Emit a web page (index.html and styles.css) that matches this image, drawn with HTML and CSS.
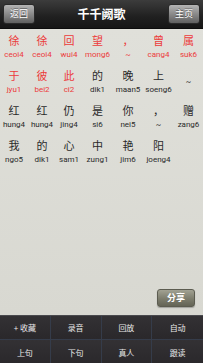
FILE: index.html
```html
<!DOCTYPE html>
<html lang="zh">
<head>
<meta charset="utf-8">
<title>千千阙歌</title>
<link rel="stylesheet" href="styles.css">
</head>
<body>
<div class="app">
  <header class="topbar">
    <button class="hbtn">返回</button>
    <div class="title">千千阙歌</div>
    <button class="hbtn">主页</button>
  </header>
  <main class="content">
    <div class="lyric-row">
      <div class="cell red"><span class="ch">徐</span><span class="py">ceoi4</span></div>
      <div class="cell red"><span class="ch">徐</span><span class="py">ceoi4</span></div>
      <div class="cell red"><span class="ch">回</span><span class="py">wui4</span></div>
      <div class="cell red"><span class="ch">望</span><span class="py">mong6</span></div>
      <div class="cell red"><span class="ch">，</span><span class="py">~</span></div>
      <div class="cell red"><span class="ch">曾</span><span class="py">cang4</span></div>
      <div class="cell red"><span class="ch">属</span><span class="py">suk6</span></div>
    </div>
    <div class="lyric-row">
      <div class="cell red"><span class="ch">于</span><span class="py">jyu1</span></div>
      <div class="cell red"><span class="ch">彼</span><span class="py">bei2</span></div>
      <div class="cell red"><span class="ch">此</span><span class="py">ci2</span></div>
      <div class="cell"><span class="ch">的</span><span class="py">dik1</span></div>
      <div class="cell"><span class="ch">晚</span><span class="py">maan5</span></div>
      <div class="cell"><span class="ch">上</span><span class="py">soeng6</span></div>
      <div class="cell lone"><span class="py">~</span></div>
    </div>
    <div class="lyric-row">
      <div class="cell"><span class="ch">红</span><span class="py">hung4</span></div>
      <div class="cell"><span class="ch">红</span><span class="py">hung4</span></div>
      <div class="cell"><span class="ch">仍</span><span class="py">jing4</span></div>
      <div class="cell"><span class="ch">是</span><span class="py">si6</span></div>
      <div class="cell"><span class="ch">你</span><span class="py">nei5</span></div>
      <div class="cell"><span class="ch">，</span><span class="py">~</span></div>
      <div class="cell"><span class="ch">赠</span><span class="py">zang6</span></div>
    </div>
    <div class="lyric-row">
      <div class="cell"><span class="ch">我</span><span class="py">ngo5</span></div>
      <div class="cell"><span class="ch">的</span><span class="py">dik1</span></div>
      <div class="cell"><span class="ch">心</span><span class="py">sam1</span></div>
      <div class="cell"><span class="ch">中</span><span class="py">zung1</span></div>
      <div class="cell"><span class="ch">艳</span><span class="py">jim6</span></div>
      <div class="cell"><span class="ch">阳</span><span class="py">joeng4</span></div>
    </div>
    <div class="spacer"></div>
    <div class="share-wrap">
      <button class="share">分享</button>
    </div>
  </main>
  <nav class="toolbar">
    <div class="tb">+ 收藏</div>
    <div class="tb">录音</div>
    <div class="tb">回放</div>
    <div class="tb">自动</div>
    <div class="tb">上句</div>
    <div class="tb">下句</div>
    <div class="tb">真人</div>
    <div class="tb">跟读</div>
  </nav>
</div>
</body>
</html>
```

FILE: styles.css
```css
* { box-sizing: border-box; }
html, body {
  margin: 0;
  padding: 0;
  width: 203px;
  height: 363px;
  overflow: hidden;
}
body {
  font-family: "Noto Sans CJK SC", "Noto Sans", sans-serif;
}
.app {
  width: 203px;
  height: 363px;
  display: flex;
  flex-direction: column;
  background: #dcdcd5;
}
.topbar {
  height: 29px;
  flex: none;
  display: flex;
  align-items: center;
  justify-content: space-between;
  padding: 0 3px;
  background: linear-gradient(#3c3c3c, #202020 60%, #161616);
  border-bottom: 1px solid #0c0c0c;
}
.hbtn {
  width: 32px;
  height: 20px;
  padding: 0;
  border: 1px solid #2a2a2a;
  border-radius: 3px;
  background: linear-gradient(#b4b4b4, #8a8a8a 50%, #606060);
  color: #fff;
  font-family: "Noto Sans CJK SC", sans-serif;
  font-size: 9px;
  line-height: 18px;
  text-shadow: 0 -1px 0 rgba(0,0,0,0.4);
}
.title {
  color: #fff;
  font-size: 12px;
  font-weight: bold;
  line-height: 16px;
}
.content {
  flex: 1;
  display: flex;
  flex-direction: column;
  padding-top: 3px;
  background: linear-gradient(#e0e0da, #d8d8d1);
}
.lyric-row {
  display: grid;
  grid-template-columns: 28px 28px 26px 31px 30px 31px 29px;
  height: 30px;
  margin-bottom: 5px;
}
.cell {
  display: flex;
  flex-direction: column;
  align-items: center;
  color: #2a2a2a;
}
.cell.red { color: #ec3b3b; }
.ch {
  font-size: 11px;
  line-height: 16px;
  height: 16px;
}
.py {
  font-family: Roboto, "Liberation Sans", sans-serif;
  font-size: 8px;
  line-height: 14px;
  height: 14px;
  white-space: nowrap;
}
.cell.lone {
  justify-content: center;
}
.spacer { flex: 1; }
.share-wrap {
  display: flex;
  justify-content: flex-end;
  padding: 0 8px 8px 0;
}
.share {
  width: 38px;
  height: 18px;
  padding: 0;
  border: 1px solid #5c5c50;
  border-radius: 3px;
  background: linear-gradient(#a2a293, #7c7c6c 55%, #646456);
  color: #fff;
  font-family: "Noto Sans CJK SC", sans-serif;
  font-size: 9px;
  font-weight: bold;
  line-height: 16px;
  box-shadow: 0 1px 1px rgba(0,0,0,0.25);
}
.toolbar {
  height: 48px;
  flex: none;
  display: grid;
  grid-template-columns: repeat(4, 1fr);
  grid-template-rows: 24px 24px;
  background: #2e2c2f;
  border-top: 1px solid #4a4a4e;
}
.tb {
  display: flex;
  align-items: center;
  justify-content: center;
  color: #e8e8e8;
  font-size: 8px;
  border-right: 1px solid #353c4a;
  border-bottom: 1px solid #353c4a;
  background: linear-gradient(#333134, #2a282b);
}
.tb:nth-child(4n) { border-right: none; }
.tb:nth-child(n+5) { border-bottom: none; }
```
